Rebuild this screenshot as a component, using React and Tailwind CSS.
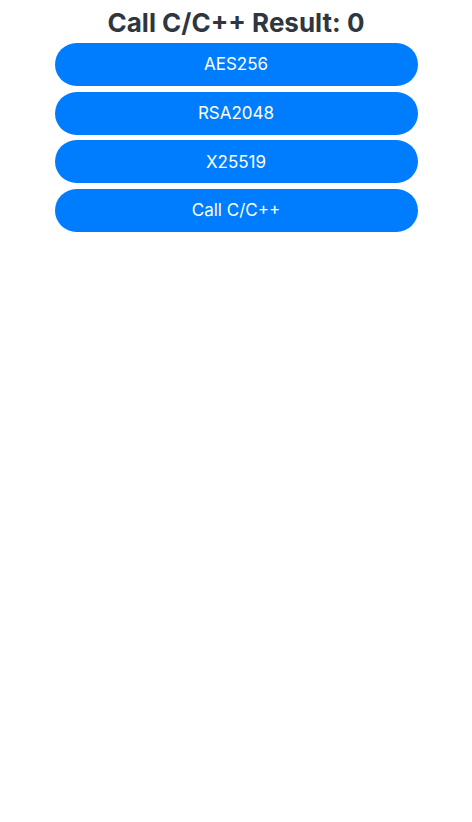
import React, { useState } from "react";

const buttons = ["AES256", "RSA2048", "X25519", "Call C/C++"];

const App = () => {
  const [result, setResult] = useState(0);

  return (
    <div className="w-full min-h-[822px] bg-white flex flex-col items-center" style={{ fontFamily: 'Inter, "Noto Sans", sans-serif' }}>
      <h1 className="mt-[3px] h-[40px] leading-[40px] text-[26px] font-bold text-[#2f3640]">
        Call C/C++ Result: {result}
      </h1>
      <div className="flex flex-col gap-[5.7px] w-[363px]">
        {buttons.map((label) => (
          <button
            key={label}
            onClick={() => setResult(0)}
            className="h-[43px] rounded-full bg-[#007dff] text-white text-[17px] pt-[1px] flex items-center justify-center"
          >
            {label}
          </button>
        ))}
      </div>
    </div>
  );
};

export default App;
